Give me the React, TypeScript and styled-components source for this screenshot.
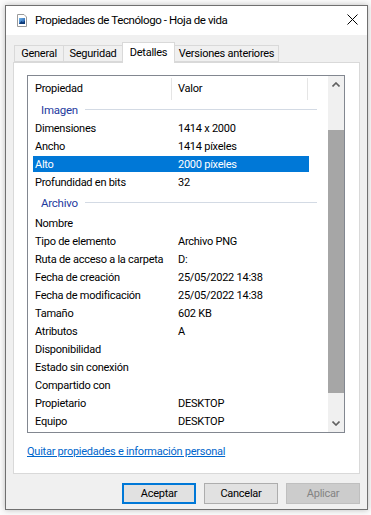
import React from "react";
import styled, { createGlobalStyle } from "styled-components";

const GlobalStyle = createGlobalStyle`
  html, body {
    margin: 0;
    padding: 0;
  }
  body {
    background: #fbfbfb;
    font-family: Roboto, "Noto Sans", sans-serif;
    font-size: 11px;
    letter-spacing: -0.25px;
    color: #000;
  }
`;

const Desktop = styled.div`
  width: 371px;
  height: 515px;
  padding: 5px 3px 5px 5px;
  box-sizing: border-box;
  overflow: hidden;
`;

const Window = styled.div`
  width: 363px;
  height: 505px;
  box-sizing: border-box;
  border: 1px solid #707070;
  box-shadow: 0 0 6px rgba(0, 0, 0, 0.25);
  display: flex;
  flex-direction: column;
  background: #f0f0f0;
`;

const TitleBar = styled.div`
  height: 29px;
  flex: none;
  background: #fff;
  display: flex;
  align-items: center;
  padding-left: 11px;
`;

const TitleText = styled.div`
  margin-left: 8px;
  font-size: 11.5px;
  letter-spacing: -0.4px;
  color: #000;
  flex: 1;
  margin-top: -2px;
`;

const CloseButton = styled.div`
  width: 30px;
  height: 29px;
  display: flex;
  align-items: center;
  justify-content: center;
  margin-top: -3px;
`;

const Body = styled.div`
  flex: 1;
  display: flex;
  flex-direction: column;
  padding: 7px 7px 6px 7px;
`;

const TabStrip = styled.div`
  display: flex;
  align-items: flex-end;
  height: 20px;
  padding-left: 1px;
  position: relative;
  z-index: 1;
`;

const Tab = styled.div<{ $w: number; $active?: boolean }>`
  width: ${(p) => p.$w}px;
  height: ${(p) => (p.$active ? 21 : 17)}px;
  box-sizing: border-box;
  margin-right: -1px;
  margin-bottom: ${(p) => (p.$active ? -1 : 0)}px;
  border: 1px solid #d9d9d9;
  border-bottom: ${(p) => (p.$active ? "none" : "1px solid #d9d9d9")};
  background: ${(p) => (p.$active ? "#fff" : "#f0f0f0")};
  display: flex;
  align-items: ${(p) => (p.$active ? "flex-start" : "center")};
  padding-top: ${(p) => (p.$active ? 3 : 0)}px;
  justify-content: center;
  position: relative;
  z-index: ${(p) => (p.$active ? 2 : 1)};
`;

const Panel = styled.div`
  height: 412px;
  box-sizing: border-box;
  border: 1px solid #d9d9d9;
  background: #fff;
  padding: 12px 0 0 13px;
  display: flex;
  flex-direction: column;
`;

const ListBox = styled.div`
  width: 318px;
  height: 358px;
  box-sizing: border-box;
  border: 1px solid #828790;
  display: flex;
`;

const ListContent = styled.div`
  flex: 1;
  display: flex;
  flex-direction: column;
`;

const HeaderRow = styled.div`
  height: 24px;
  display: flex;
  flex: none;
`;

const HeaderCell = styled.div<{ $w: number; $pad: number }>`
  width: ${(p) => p.$w}px;
  box-sizing: border-box;
  padding-left: ${(p) => p.$pad}px;
  display: flex;
  align-items: center;
  position: relative;
  &::after {
    content: "";
    position: absolute;
    right: 0;
    top: 2px;
    bottom: 0;
    width: 1px;
    background: #e5e5e5;
  }
`;

const GroupRow = styled.div<{ $h: number }>`
  height: ${(p) => p.$h}px;
  display: flex;
  align-items: center;
  padding-left: 13px;
  padding-right: 11px;
  color: #1e3a9e;
  font-size: 11.5px;
  gap: 7px;
`;

const GroupLine = styled.div`
  flex: 1;
  height: 1px;
  background: #d3dae4;
`;

const Row = styled.div<{ $selected?: boolean }>`
  height: 16px;
  margin: 1px 0 1px 5px;
  width: 276px;
  display: flex;
  align-items: center;
  background: ${(p) => (p.$selected ? "#0078d7" : "transparent")};
  color: ${(p) => (p.$selected ? "#fff" : "#000")};
`;

const NameCell = styled.div`
  width: 145px;
  padding-left: 2px;
  box-sizing: border-box;
  white-space: nowrap;
`;

const ValueCell = styled.div`
  white-space: nowrap;
`;

const ScrollBar = styled.div`
  width: 16px;
  background: #f0f0f0;
  display: flex;
  flex-direction: column;
`;

const ScrollArrow = styled.div`
  height: 17px;
  display: flex;
  align-items: center;
  justify-content: center;
`;

const ScrollThumb = styled.div<{ $top: number; $h: number }>`
  margin-top: ${(p) => p.$top}px;
  height: ${(p) => p.$h}px;
  background: #a6a6a6;
`;

const ScrollGap = styled.div`
  flex: 1;
`;

const LinkText = styled.a`
  margin-top: 12px;
  color: #0066cc;
  text-decoration: underline;
  align-self: flex-start;
  cursor: pointer;
`;

const ButtonRow = styled.div`
  display: flex;
  justify-content: flex-end;
  gap: 8px;
  margin-top: 9px;
`;

const Button = styled.div<{ $variant?: "default" | "disabled" }>`
  width: 74px;
  height: 21px;
  box-sizing: border-box;
  display: flex;
  align-items: center;
  justify-content: center;
  background: ${(p) => (p.$variant === "disabled" ? "#cccccc" : "#e1e1e1")};
  color: ${(p) => (p.$variant === "disabled" ? "#838383" : "#000")};
  border: ${(p) =>
    p.$variant === "default"
      ? "2px solid #0078d7"
      : p.$variant === "disabled"
      ? "1px solid #bfbfbf"
      : "1px solid #adadad"};
`;

const FileIcon = () => (
  <svg width="10" height="13" viewBox="0 0 10 13">
    <path d="M0.5 0.5 H7 L9.5 3 V12.5 H0.5 Z" fill="#fff" stroke="#9a9a9a" />
    <defs>
      <linearGradient id="pic" x1="0" y1="0" x2="1" y2="1">
        <stop offset="0" stopColor="#6fb6ee" />
        <stop offset="1" stopColor="#1b4f9c" />
      </linearGradient>
    </defs>
    <rect x="2" y="4" width="6" height="6" fill="url(#pic)" />
    <path d="M2 10 L4.5 7 L6 8.5 L8 6.5 V10 Z" fill="#0e3a78" />
  </svg>
);

const CloseIcon = () => (
  <svg width="11" height="11" viewBox="0 0 11 11">
    <path d="M0.5 0.5 L10.5 10.5 M10.5 0.5 L0.5 10.5" stroke="#000" strokeWidth="1" />
  </svg>
);

const Chevron = ({ up }: { up?: boolean }) => (
  <svg width="8" height="5" viewBox="0 0 8 5">
    <path
      d={up ? "M0.5 4.5 L4 1 L7.5 4.5" : "M0.5 0.5 L4 4 L7.5 0.5"}
      fill="none"
      stroke="#606060"
      strokeWidth="1.6"
    />
  </svg>
);

type Item = { name: string; value?: string; selected?: boolean };

const imagen: Item[] = [
  { name: "Dimensiones", value: "1414 x 2000" },
  { name: "Ancho", value: "1414 píxeles" },
  { name: "Alto", value: "2000 píxeles", selected: true },
  { name: "Profundidad en bits", value: "32" },
];

const archivo: Item[] = [
  { name: "Nombre" },
  { name: "Tipo de elemento", value: "Archivo PNG" },
  { name: "Ruta de acceso a la carpeta", value: "D:" },
  { name: "Fecha de creación", value: "25/05/2022 14:38" },
  { name: "Fecha de modificación", value: "25/05/2022 14:38" },
  { name: "Tamaño", value: "602 KB" },
  { name: "Atributos", value: "A" },
  { name: "Disponibilidad" },
  { name: "Estado sin conexión" },
  { name: "Compartido con" },
  { name: "Propietario", value: "DESKTOP" },
  { name: "Equipo", value: "DESKTOP" },
];

const renderRows = (items: Item[]) =>
  items.map((it) => (
    <Row key={it.name} $selected={it.selected}>
      <NameCell>{it.name}</NameCell>
      <ValueCell>{it.value}</ValueCell>
    </Row>
  ));

export default function App() {
  return (
    <>
      <GlobalStyle />
      <Desktop>
        <Window>
          <TitleBar>
            <FileIcon />
            <TitleText>Propiedades de Tecnólogo - Hoja de vida</TitleText>
            <CloseButton>
              <CloseIcon />
            </CloseButton>
          </TitleBar>
          <Body>
            <TabStrip>
              <Tab $w={50}>General</Tab>
              <Tab $w={60}>Seguridad</Tab>
              <Tab $w={53} $active>
                Detalles
              </Tab>
              <Tab $w={105}>Versiones anteriores</Tab>
            </TabStrip>
            <Panel>
              <ListBox>
                <ListContent>
                  <HeaderRow>
                    <HeaderCell $w={144} $pad={7}>
                      Propiedad
                    </HeaderCell>
                    <HeaderCell $w={136} $pad={6}>
                      Valor
                    </HeaderCell>
                  </HeaderRow>
                  <GroupRow $h={19}>
                    Imagen
                    <GroupLine />
                  </GroupRow>
                  {renderRows(imagen)}
                  <GroupRow $h={23}>
                    Archivo
                    <GroupLine />
                  </GroupRow>
                  {renderRows(archivo)}
                </ListContent>
                <ScrollBar>
                  <ScrollArrow>
                    <Chevron up />
                  </ScrollArrow>
                  <ScrollThumb $top={37} $h={263} />
                  <ScrollGap />
                  <ScrollArrow>
                    <Chevron />
                  </ScrollArrow>
                </ScrollBar>
              </ListBox>
              <LinkText>Quitar propiedades e información personal</LinkText>
            </Panel>
            <ButtonRow>
              <Button $variant="default">Aceptar</Button>
              <Button>Cancelar</Button>
              <Button $variant="disabled">Aplicar</Button>
            </ButtonRow>
          </Body>
        </Window>
      </Desktop>
    </>
  );
}
